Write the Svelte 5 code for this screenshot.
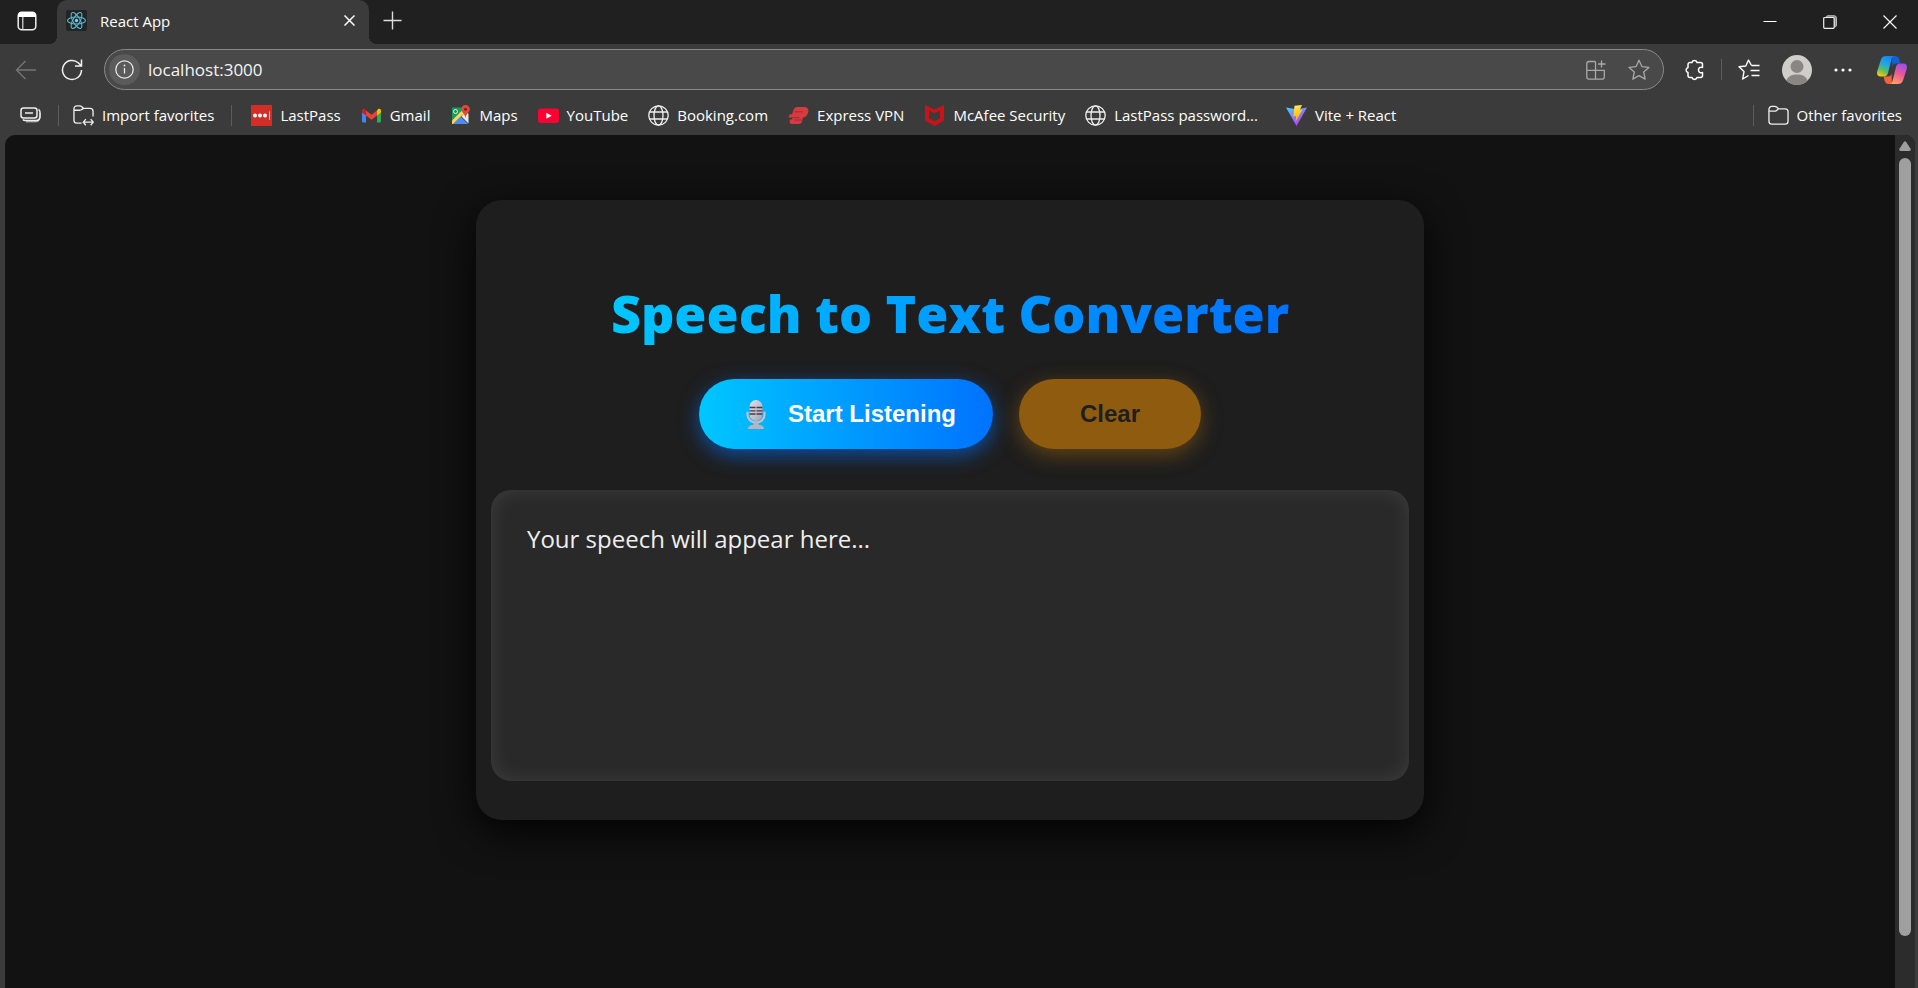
<script>
  const bookmarks = [
    { icon: 'lastpass', label: 'LastPass' },
    { icon: 'gmail', label: 'Gmail' },
    { icon: 'maps', label: 'Maps' },
    { icon: 'youtube', label: 'YouTube' },
    { icon: 'globe', label: 'Booking.com' },
    { icon: 'express', label: 'Express VPN' },
    { icon: 'mcafee', label: 'McAfee Security' },
    { icon: 'globe', label: 'LastPass password...', wide: true },
    { icon: 'vite', label: 'Vite + React' }
  ];
  let address = $state('localhost:3000');
</script>

{#snippet siteIcon(name)}
  <svg class="icon" viewBox="0 0 21 21" aria-hidden="true">
    {#if name === 'lastpass'}
      <rect width="21" height="21" fill="#d32d27" />
      <circle cx="4" cy="10.500" r="2" fill="#fff" /><circle cx="9" cy="10.500" r="2" fill="#fff" /><circle cx="14" cy="10.500" r="2" fill="#fff" />
      <path d="M18.500 6.500v8.500" stroke="#f3b9b6" />
    {:else if name === 'gmail'}
      <path d="M1 5.500V16a1.500 1.500 0 0 0 1.500 1.500H5V9z" fill="#4285f4" />
      <path d="M20 5.500V16a1.500 1.500 0 0 1-1.500 1.500H16V9z" fill="#34a853" />
      <path d="M5 5.500l5.500 4.200L16 5.500V10.500l-5.500 4.200L5 10.500z" fill="#ea4335" />
      <path d="M1 5.500V7.500l4 3V5.200L4 4.200C2.600 3.200 1 4 1 5.500z" fill="#c5221f" />
      <path d="M20 5.500V7.500l-4 3V5.200l1-1C18.400 3.200 20 4 20 5.500z" fill="#fbbc04" />
    {:else if name === 'maps'}
      <path d="M2 2.500H16L2 18z" fill="#1b9a5b" />
      <path d="M14.500 3L2 15.500V19H3.500L17 5.500z" fill="#fdd752" />
      <path d="M16.500 5.500L18.500 9v9.500l-7-7z" fill="#e9e7e3" />
      <path d="M10.500 11.500L18 19H3z" fill="#4c8df5" />
      <circle cx="5.500" cy="6.500" r="2" fill="none" stroke="#d9efe2" />
      <path d="M15.500 0a4.300 4.300 0 0 0-4.300 4.300c0 3 3.500 4 4.300 8.700.8-4.700 4.300-5.700 4.300-8.700A4.300 4.300 0 0 0 15.500 0z" fill="#df4b3b" /><circle cx="15.500" cy="4.300" r="1.500" fill="#7d1f16" />
    {:else if name === 'youtube'}
      <rect y="3.500" width="21" height="14.500" rx="3" fill="#ff0033" /><path d="M8.300 7.700v6l5.400-3z" fill="#fff" />
    {:else if name === 'globe'}
      <g fill="none" stroke="#f0f0f0" stroke-width="1.300"><circle cx="10.500" cy="10.500" r="9.700" /><ellipse cx="10.500" cy="10.500" rx="4.500" ry="9.700" /><path d="M1.600 7h17.800M1.600 14h17.800" /></g>
    {:else if name === 'express'}
      <path d="M9.500 2H16c3.500 0 5 2.200 4.200 5.200C19.300 10.500 17.500 12.500 14.500 12.500H.5L1.800 9.300H4L5.500 5C6.200 2.900 7.500 2 9.500 2z" fill="#da3940" />
      <path d="M4.500 12h10.500l-.8 4c-.5 2-1.500 3-3.500 3H4c-2 0-2.800-1.500-2.300-3.500l.5-.9H4z" fill="#da3940" />
      <path d="M6.500 6.800h8.500M4.500 12.600h7M6 15h8" stroke="#873338" stroke-width=".9" />
    {:else if name === 'mcafee'}
      <path d="M1 0l9.500 4.500L20 0v15.500L10.500 21 1 15.500zM5 5.500v7.700l5.500 3.100 5.500-3.100V5.500l-5.500 2.800z" fill="#c81418" fill-rule="evenodd" />
    {:else}
      <defs>
        <linearGradient id="vite-a" x1="0" y1="0" x2=".6" y2="1"><stop stop-color="#41d1ff" /><stop offset="1" stop-color="#bd34fe" /></linearGradient>
        <linearGradient id="vite-b" x1=".4" y1="0" x2=".6" y2="1"><stop stop-color="#ffea83" /><stop offset=".2" stop-color="#ffdd35" /><stop offset="1" stop-color="#ffa800" /></linearGradient>
      </defs>
      <path d="M0 2.500L10.500 4.300 21 2.500 10.500 21z" fill="url(#vite-a)" /><path d="M8.500.8L16 0l-2.300 5 2.800-.5L9.500 17l.8-6.300-2.900.7z" fill="url(#vite-b)" />
    {/if}
  </svg>
{/snippet}

<div class="browser">
  <header class="tabstrip">
    <button class="tool actions" aria-label="Tab actions menu">
      <svg width="20" height="20" viewBox="0 0 20 20"><rect x="1.200" y="1.200" width="17.600" height="17.600" rx="3.500" fill="none" stroke="#eee" stroke-width="1.500" /><path d="M1 6V4.500A3.500 3.500 0 0 1 4.500 1h11A3.500 3.500 0 0 1 19 4.500V6z" fill="#fff" /><path d="M5.800 6v13" stroke="#ddd" stroke-width="1.200" /></svg>
    </button>
    <div class="tab">
      <svg width="21" height="21" viewBox="0 0 21 21" aria-hidden="true"><rect width="21" height="21" rx="2" fill="#222426" /><g fill="none" stroke="#58b9d0" stroke-width="1.100"><ellipse cx="10.500" cy="10.500" rx="9" ry="3.500" /><ellipse cx="10.500" cy="10.500" rx="9" ry="3.500" transform="rotate(60 10.500 10.500)" /><ellipse cx="10.500" cy="10.500" rx="9" ry="3.500" transform="rotate(120 10.500 10.500)" /></g><circle cx="10.500" cy="10.500" r="1.700" fill="#6bd5ee" /></svg>
      <span class="tab-title">React App</span>
      <button class="tool" aria-label="Close tab"><svg width="11" height="11" viewBox="0 0 11 11"><path d="M.5.500l10 10M10.500.500l-10 10" stroke="#fff" stroke-width="1.500" /></svg></button>
    </div>
    <button class="tool new-tab" aria-label="New tab"><svg width="19" height="19" viewBox="0 0 19 19"><path d="M9.500.500v18M.5 9.500h18" stroke="#ddd" stroke-width="1.400" /></svg></button>
    <div class="window-controls">
      <button class="tool" aria-label="Minimize"><svg width="14" height="14" viewBox="0 0 14 14"><path d="M.5 6.500h13" stroke="#fff" /></svg></button>
      <button class="tool" aria-label="Restore"><svg width="14" height="14" viewBox="0 0 14 14" fill="none" stroke="#eee"><path d="M3 2.500A2 2 0 0 1 5 .700h6a2.500 2.500 0 0 1 2.500 2.500V10a2 2 0 0 1-2 2" fill="#8c8c8c" stroke="#bbb" /><rect x=".7" y="2.500" width="10.500" height="10.800" rx="1" fill="#202020" stroke-width="1.200" /></svg></button>
      <button class="tool" aria-label="Close window"><svg width="14" height="14" viewBox="0 0 14 14"><path d="M.5.500l13 13M13.500.500l-13 13" stroke="#fff" stroke-width="1.100" /></svg></button>
    </div>
  </header>

  <nav class="toolbar" aria-label="Navigation">
    <button class="tool" aria-label="Back"><svg width="22" height="20" viewBox="0 0 22 20"><path d="M21 10H1.500M10.500 1L1.500 10l9 9" fill="none" stroke="#757575" stroke-width="1.400" /></svg></button>
    <button class="tool reload" aria-label="Refresh"><svg width="22" height="22" viewBox="0 0 22 22"><path d="M20.500 11a9.500 9.500 0 1 1-3-7L20 6.500M20.500.500V7H14" fill="none" stroke="#f2f2f2" stroke-width="1.500" /></svg></button>
    <div class="address">
      <button class="tool info" aria-label="Site information"><svg width="19" height="19" viewBox="0 0 19 19"><circle cx="9.500" cy="9.500" r="8.700" fill="none" stroke="#e8e8e8" stroke-width="1.300" /><path d="M9.500 8v5.500" stroke="#e8e8e8" stroke-width="1.300" /><circle cx="9.500" cy="5.500" r=".9" fill="#e8e8e8" /></svg></button>
      <input aria-label="Address" bind:value={address} />
      <button class="tool" aria-label="Install app"><svg width="20" height="20" viewBox="0 0 20 20" fill="none" stroke="#a8a8a8" stroke-width="1.300"><path d="M9.500 1.500H3A2.300 2.300 0 0 0 .8 3.800V17A2.300 2.300 0 0 0 3 19.200H16A2.300 2.300 0 0 0 18.300 17V10.300H.8M9.500 1.500V19.200M15.500.500v7M12 4h7.500" /></svg></button>
      <button class="tool" aria-label="Add to favorites"><svg width="22" height="22" viewBox="0 0 22 22"><path d="M11 1.200l2.900 6.400 7 .8-5.200 4.700 1.500 7-6.200-3.500-6.200 3.500 1.500-7L1.100 8.400l7-.8z" fill="none" stroke="#a8a8a8" stroke-width="1.300" stroke-linejoin="round" /></svg></button>
    </div>
    <div class="extras">
      <button class="tool" aria-label="Extensions"><svg width="21" height="22" viewBox="0 0 21 22"><path d="M6 3.500H8A2.600 2.600 0 0 1 13 3.500H16.500a2 2 0 0 1 2 2V8.500C16 7.800 14.500 9 14.500 11s1.500 3.200 4 2.500V16.500a2 2 0 0 1-2 2H13A2.600 2.600 0 0 1 8 18.500H6a2 2 0 0 1-2-2V13.500A2.600 2.600 0 0 1 4 8.500V5.500A2 2 0 0 1 6 3.500z" fill="none" stroke="#fff" stroke-width="1.500" stroke-linejoin="round" /></svg></button>
      <span class="divider"></span>
      <button class="tool" aria-label="Favorites"><svg width="22" height="21" viewBox="0 0 22 21"><path d="M13.500 6.500L10.500 1 7.800 7 1 7.800l5 4.800L4.700 20l5.800-3.500" fill="none" stroke="#fff" stroke-width="1.400" stroke-linejoin="round" /><path d="M13.500 6.500H21.500M12.500 11.500h9M13.500 16.500h8" stroke="#fff" stroke-width="1.400" /></svg></button>
      <button class="tool" aria-label="Profile"><svg width="30" height="30" viewBox="0 0 30 30"><circle cx="15" cy="15" r="15" fill="#d0cecb" /><circle cx="15" cy="11.500" r="6.500" fill="#8a8683" /><path d="M4.500 25.700C6 21 10 19.500 15 19.500s9 1.500 10.500 6.200A15 15 0 0 1 4.500 25.700z" fill="#8a8683" /></svg></button>
      <button class="tool" aria-label="Settings and more"><svg width="18" height="4" viewBox="0 0 18 4" fill="#fff"><circle cx="2" cy="2" r="1.600" /><circle cx="9" cy="2" r="1.600" /><circle cx="16" cy="2" r="1.600" /></svg></button>
      <button class="tool copilot" aria-label="Copilot">
        <svg width="30" height="30" viewBox="0 0 30 30">
          <defs>
            <linearGradient id="cp-a" x1=".6" y1="0" x2=".2" y2="1"><stop stop-color="#1487f5" /><stop offset=".4" stop-color="#22a9e0" /><stop offset=".7" stop-color="#63bd5a" /><stop offset="1" stop-color="#ffcb0e" /></linearGradient>
            <linearGradient id="cp-b" x1=".7" y1="0" x2=".3" y2="1"><stop stop-color="#a04de8" /><stop offset=".5" stop-color="#ee5b92" /><stop offset="1" stop-color="#ffa164" /></linearGradient>
          </defs>
          <path d="M15 1h3.500a4 4 0 0 1 3.600 2.600L23.500 8.500H19c-2 0-3 1-3.500 3z" fill="#1160d8" />
          <path d="M15 29h-3.500a4 4 0 0 1-3.600-2.600L6.500 21.500H11c2 0 3-1 3.500-3z" fill="#f8603c" />
          <path d="M9 1h8.500c-1.800 0-2.500 1-3 3L11 18c-.6 2.300-1.700 3.500-4 3.500H3.500C.5 21.500-.5 19 .3 16L4 4.500C4.800 2 6.500 1 9 1z" fill="url(#cp-a)" />
          <path d="M21 29h-8.500c1.800 0 2.500-1 3-3L19 12c.6-2.300 1.700-3.500 4-3.500h3.500c3 0 4 2.500 3.200 5.500L26 25.500c-.8 2.500-2.500 3.500-5 3.500z" fill="url(#cp-b)" />
        </svg>
      </button>
    </div>
  </nav>

  <nav class="bookmarks" aria-label="Favorites bar">
    <button class="tool workspaces" aria-label="Tab groups"><svg width="22" height="16" viewBox="0 0 22 16" fill="none" stroke="#eee" stroke-width="1.500"><rect x="1" y="1" width="16" height="10" rx="2.500" /><path d="M5 6h8M18.500 2.500c1 .5 1.500 1 1.500 3V9c0 3-1.500 4.500-4 4.500H5c-1 0-1.500-.3-2-1" /><path d="M20 6v4c0 3-1.500 4.800-4 4.800H6" stroke-width=".8" /></svg></button>
    <span class="divider"></span>
    <a href="#import"><svg class="icon" viewBox="0 0 22 22" fill="none" stroke="#eee" stroke-width="1.400"><path d="M9 19H4a3 3 0 0 1-3-3V4a3 3 0 0 1 3-3H7a3 3 0 0 1 2 .7L11 3.500H18a3 3 0 0 1 3 3V12M1 5.500H7a3 3 0 0 0 2-.7L11 3.500M11 18H21M13.500 14.800L10.800 18l2.700 3.200M18.500 14.800L21.200 18l-2.700 3.200" /></svg>Import favorites</a>
    <span class="divider second"></span>
    <ul>
      {#each bookmarks as item}
        <li class:wide={item.wide}><a href="#{item.icon}">{@render siteIcon(item.icon)}{item.label}</a></li>
      {/each}
    </ul>
    <span class="divider"></span>
    <a href="#other"><svg class="icon" viewBox="0 0 22 22" fill="none" stroke="#eee" stroke-width="1.400"><path d="M1 5V17a3 3 0 0 0 3 3H18a3 3 0 0 0 3-3V7a3 3 0 0 0-3-3H11L9 2.200A3 3 0 0 0 7 1.500H4A3 3 0 0 0 1 4.500V6.500H7a3 3 0 0 0 2-.8L11 4" /></svg>Other favorites</a>
  </nav>

  <div class="viewport">
    <main>
      <section class="card">
        <h1>Speech to Text Converter</h1>
        <div class="buttons">
          <button class="start">
            <svg width="32" height="32" viewBox="0 0 32 32" aria-hidden="true">
              <defs><linearGradient id="mic" x1="0" y1="0" x2="1" y2="1"><stop stop-color="#e4e2e8" /><stop offset="1" stop-color="#a9a2b2" /></linearGradient></defs>
              <path d="M7.500 14.500V17a8.500 7.500 0 0 0 17 0V14.500" fill="none" stroke="#c3c0cc" stroke-width="2.200" stroke-linecap="round" />
              <rect x="9.500" y="2" width="13" height="21" rx="6.500" fill="url(#mic)" />
              <path d="M9.500 9.500h6M16.500 9.500h6M9.500 12.800h6M16.500 12.800h6M9.500 16h6M16.500 16h6" stroke="#433b53" stroke-width="1.300" />
              <path d="M13.500 24.500h5v2.200c3 .2 5.500 1.500 5.500 4.300H8c0-2.800 2.500-4.100 5.500-4.300z" fill="#b9b3bf" />
            </svg>
            Start Listening
          </button>
          <button class="clear">Clear</button>
        </div>
        <div class="transcript" aria-live="polite">Your speech will appear here...</div>
      </section>
    </main>
    <div class="scrollbar" aria-hidden="true">
      <svg width="12" height="10" viewBox="0 0 12 10"><path d="M5 .800Q6-.500 7 .800L11.700 8Q12 10 10.500 10H1.500Q0 10 .300 8z" fill="#9f9f9f" /></svg>
      <span></span>
    </div>
  </div>
</div>

<style>
  :global(body) { margin: 0; background: #3b3b3b; }
  .browser {
    display: flex;
    flex-direction: column;
    height: 100vh;
    background: #3b3b3b;
    color: #fff;
    font-family: "Open Sans", "Noto Sans", sans-serif;
    font-size: 15px;
  }
  button { font: inherit; color: inherit; border: 0; cursor: pointer; }
  svg { display: block; flex: none; }
  .tool { display: flex; align-items: center; justify-content: center; padding: 0; background: none; flex: none; }
  .tabstrip { display: flex; align-items: center; height: 44px; background: #202020; }
  .actions { width: 53px; padding-bottom: 2px; }
  .tab {
    position: relative;
    display: flex;
    align-items: center;
    gap: 13px;
    box-sizing: border-box;
    width: 312px;
    height: 44px;
    margin-left: 4px;
    padding: 0 14px 3px 9px;
    border-radius: 10px 10px 0 0;
    background: #3b3b3b;
  }
  .tab::before, .tab::after {
    content: "";
    position: absolute;
    bottom: 0;
    width: 8px;
    height: 8px;
  }
  .tab::before { left: -8px; background: radial-gradient(circle at 0 0, transparent 8px, #3b3b3b 8px); }
  .tab::after { right: -8px; background: radial-gradient(circle at 100% 0, transparent 8px, #3b3b3b 8px); }
  .tab-title { flex: 1; }
  .new-tab { width: 46px; padding-bottom: 3px; }
  .window-controls { display: flex; gap: 46px; margin-left: auto; padding-right: 21px; }
  .toolbar { display: flex; align-items: center; height: 51px; padding: 0 11px 0 15px; }
  .reload { margin: 0 21px 0 24px; }
  .address {
    display: flex;
    align-items: center;
    gap: 22px;
    flex: 1;
    min-width: 0;
    box-sizing: border-box;
    height: 41px;
    padding: 0 13px 0 4px;
    border: 1px solid #8a8a8a;
    border-radius: 21px;
    background: #494949;
  }
  .info { width: 31px; height: 31px; border-radius: 50%; background: #5b5b5b; }
  input {
    flex: 1;
    min-width: 0;
    margin-left: -14px;
    padding: 0;
    border: 0;
    outline: 0;
    background: none;
    color: #f4f4f4;
    font: 17px "Open Sans", "Noto Sans", sans-serif;
  }
  .extras { display: flex; align-items: center; margin-left: 20px; gap: 22px; }
  .extras .divider { margin: 0 -6px; }
  .copilot { margin-left: 3px; }
  .divider { flex: none; width: 1px; height: 21px; background: #5c5c5c; }
  .bookmarks { display: flex; align-items: center; height: 40px; padding: 0 16px 0 20px; }
  .workspaces { margin-right: 16px; }
  .bookmarks .divider { margin-right: 14px; }
  .bookmarks .divider + a { flex: none; }
  .bookmarks .second { margin: 0 19px 0 17px; }
  .bookmarks ul { display: flex; flex: 1; gap: 20px; margin: 0; padding: 0; list-style: none; }
  .bookmarks .wide { margin-right: 8px; }
  .bookmarks a { display: flex; align-items: center; gap: 8px; color: #fff; text-decoration: none; white-space: nowrap; }
  .icon { width: 21px; height: 21px; }
  .viewport { display: flex; flex: 1; min-height: 0; margin: 0 3px 0 5px; border-radius: 10px 10px 0 0; overflow: hidden; background: #121212; }
  main { flex: 1; padding: 65px 24px 0; }
  .card {
    display: flex;
    flex-direction: column;
    align-items: center;
    box-sizing: border-box;
    max-width: 948px;
    margin: 0 auto;
    padding: 81px 15px 39px;
    border-radius: 26px;
    background: #1e1e1e;
    box-shadow: 0 12px 40px rgba(0, 0, 0, 0.9);
  }
  h1 {
    margin: 0 0 34px;
    font-size: 52px;
    font-weight: 800;
    line-height: 64px;
    color: transparent;
    background: linear-gradient(90deg, #00c6ff, #0072ff);
    -webkit-background-clip: text;
    background-clip: text;
  }
  .buttons { display: flex; gap: 26px; margin-bottom: 41px; }
  .buttons button {
    display: flex;
    align-items: center;
    height: 70px;
    border-radius: 35px;
    font: bold 24px "Liberation Sans", Arial, sans-serif;
  }
  .start {
    gap: 16px;
    padding: 0 37px 0 41px;
    background: linear-gradient(90deg, #00c6ff, #0072ff);
    box-shadow: 0 6px 20px rgba(0, 114, 255, 0.6);
  }
  .buttons .clear {
    padding: 0 61px;
    color: #1f1f1f;
    background: #8f5b0f;
    box-shadow: 0 6px 20px rgba(143, 91, 15, 0.6);
  }
  .transcript {
    box-sizing: border-box;
    width: 100%;
    min-height: 291px;
    padding: 29px 36px;
    border-radius: 20px;
    background: #292929;
    box-shadow: inset 0 0 20px rgba(255, 255, 255, 0.1);
    color: #eee;
    font-size: 24px;
    line-height: 40px;
  }
  .scrollbar { display: flex; flex-direction: column; align-items: center; gap: 7px; box-sizing: border-box; width: 20px; padding: 6px 0 52px; background: #2c2c2c; }
  .scrollbar span { flex: 1; width: 12px; border-radius: 6px; background: #9f9f9f; }
</style>
